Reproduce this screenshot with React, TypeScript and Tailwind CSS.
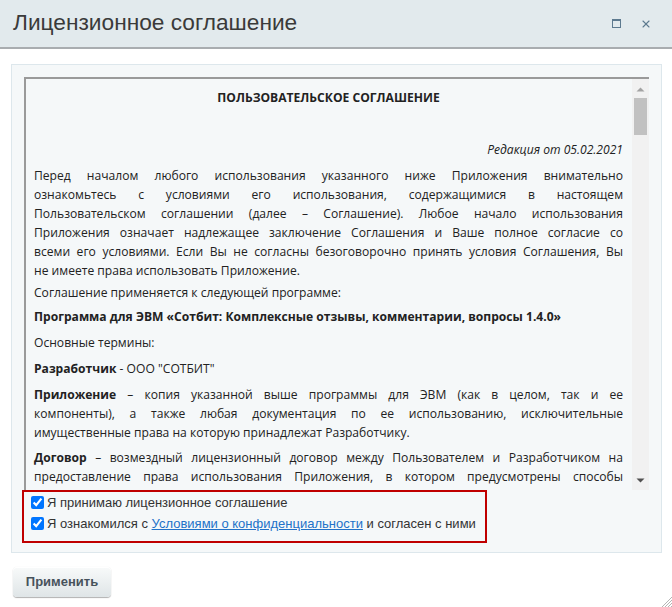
import { X } from "lucide-react";

const J = "block text-justify [text-align-last:justify]";

function Line({ children, last }: { children: React.ReactNode; last?: boolean }) {
  return <span className={last ? "block" : J}>{children}</span>;
}

export default function App() {
  return (
    <div className="w-[672px] h-[607px] bg-white overflow-hidden relative font-['Liberation_Sans',Arial,sans-serif]">
      {/* header */}
      <div className="h-[49px] bg-[#e2eaed] border-b-2 border-[#a9adb0] flex items-center pl-[13px] pr-[20px]">
        <div className="flex-1 text-[22.7px] text-[#3a3a3a] leading-none pb-[2px]">Лицензионное соглашение</div>
        <div className="w-[9px] h-[9px] border border-t-2 border-[#5d7a8f] mr-[19px]" />
        <X size={12} strokeWidth={2.2} className="text-[#5d7a8f]" />
      </div>

      <div className="pt-[15px] pl-[11px] pr-[10px]">
        <div className="border border-[#dde7ec] bg-[#f5f8f9] pt-[12px] pl-[10px] pr-[12px] pb-[9px]">
          {/* agreement text */}
          <div className="ml-[2px] h-[413px] flex border-t-2 border-l-2 border-[#9a9a9a]">
            <div className="flex-1 overflow-hidden pt-[9px] pl-[8px] pr-[9px] font-['Open_Sans','Noto_Sans',sans-serif] text-[12.1px] leading-[19px] text-[#222]">
              <p className="text-center font-bold mb-[6px]">ПОЛЬЗОВАТЕЛЬСКОЕ СОГЛАШЕНИЕ</p>
              <p className="mb-[8px]">&nbsp;</p>
              <p className="text-right italic mb-[7px]">Редакция от 05.02.2021</p>
              <p className="mb-[3px]">
                <Line>Перед началом любого использования указанного ниже Приложения внимательно</Line>
                <Line>ознакомьтесь с условиями его использования, содержащимися в настоящем</Line>
                <Line>Пользовательском соглашении (далее – Соглашение). Любое начало использования</Line>
                <Line>Приложения означает надлежащее заключение Соглашения и Ваше полное согласие со</Line>
                <Line>всеми его условиями. Если Вы не согласны безоговорочно принять условия Соглашения, Вы</Line>
                <Line last>не имеете права использовать Приложение.</Line>
              </p>
              <p className="mb-[5px]">Соглашение применяется к следующей программе:</p>
              <p className="mb-[7px] font-bold">
                Программа для ЭВМ «Сотбит: Комплексные отзывы, комментарии, вопросы 1.4.0»
              </p>
              <p className="mb-[7px]">Основные термины:</p>
              <p className="mb-[7px]">
                <b>Разработчик</b> - ООО "СОТБИТ"
              </p>
              <p className="mb-[6px]">
                <Line>
                  <b>Приложение</b> – копия указанной выше программы для ЭВМ (как в целом, так и ее
                </Line>
                <Line>компоненты), а также любая документация по ее использованию, исключительные</Line>
                <Line last>имущественные права на которую принадлежат Разработчику.</Line>
              </p>
              <p className="mb-[6px]">
                <Line>
                  <b>Договор</b> – возмездный лицензионный договор между Пользователем и Разработчиком на
                </Line>
                <Line>предоставление права использования Приложения, в котором предусмотрены способы</Line>
                <Line>использования Приложения. Договор заключается путем принятия условий оферты, которой</Line>
                <Line last>является настоящее Соглашение.</Line>
              </p>
            </div>
            {/* scrollbar */}
            <div className="w-[17px] bg-[#f1f1f1] flex flex-col items-center">
              <svg width="9" height="5" viewBox="0 0 9 5" className="mt-[8px]">
                <path d="M0.5 4.5 L4.5 0.5 L8.5 4.5 Z" fill="#a3a3a3" />
              </svg>
              <div className="mt-[6px] w-[13px] h-[37px] bg-[#c1c1c1]" />
              <div className="flex-1" />
              <svg width="9" height="5" viewBox="0 0 9 5" className="mb-[7px]">
                <path d="M0.5 0.5 L4.5 4.5 L8.5 0.5 Z" fill="#505050" />
              </svg>
            </div>
          </div>

          {/* consent checkboxes */}
          <div className="w-[465px] border-2 border-[#c00000] pb-[7px] pl-[3px] text-[13px] text-[#333]">
            <label className="flex items-center h-[21px]">
              <input type="checkbox" defaultChecked className="w-[13px] h-[13px] ml-[4px] mr-[3px]" />
              Я принимаю лицензионное соглашение
            </label>
            <label className="flex items-center h-[21px]">
              <input type="checkbox" defaultChecked className="w-[13px] h-[13px] ml-[4px] mr-[3px]" />
              <span>
                Я ознакомился с{" "}
                <a href="#" className="text-[#2272c8] underline">
                  Условиями о конфиденциальности
                </a>{" "}
                и согласен с ними
              </span>
            </label>
          </div>
        </div>
      </div>

      <div className="pl-[13px] pt-[14px]">
        <button className="w-[98px] h-[30px] rounded-[4px] bg-gradient-to-b from-[#f8fafa] to-[#dfe5e7] shadow-[0_0_1px_rgba(0,0,0,0.11),0_1px_1px_rgba(0,0,0,0.3),inset_0_1px_0_#fff] text-[13px] font-bold text-[#47525b]">
          Применить
        </button>
      </div>

      {/* resize grip */}
      <svg width="12" height="12" viewBox="0 0 12 12" className="absolute right-0 bottom-0">
        <path d="M12 2 L2 12 M12 5 L5 12 M12 8 L8 12 M12 11 L11 12" stroke="#b5b5b5" strokeWidth="1" />
      </svg>
    </div>
  );
}
